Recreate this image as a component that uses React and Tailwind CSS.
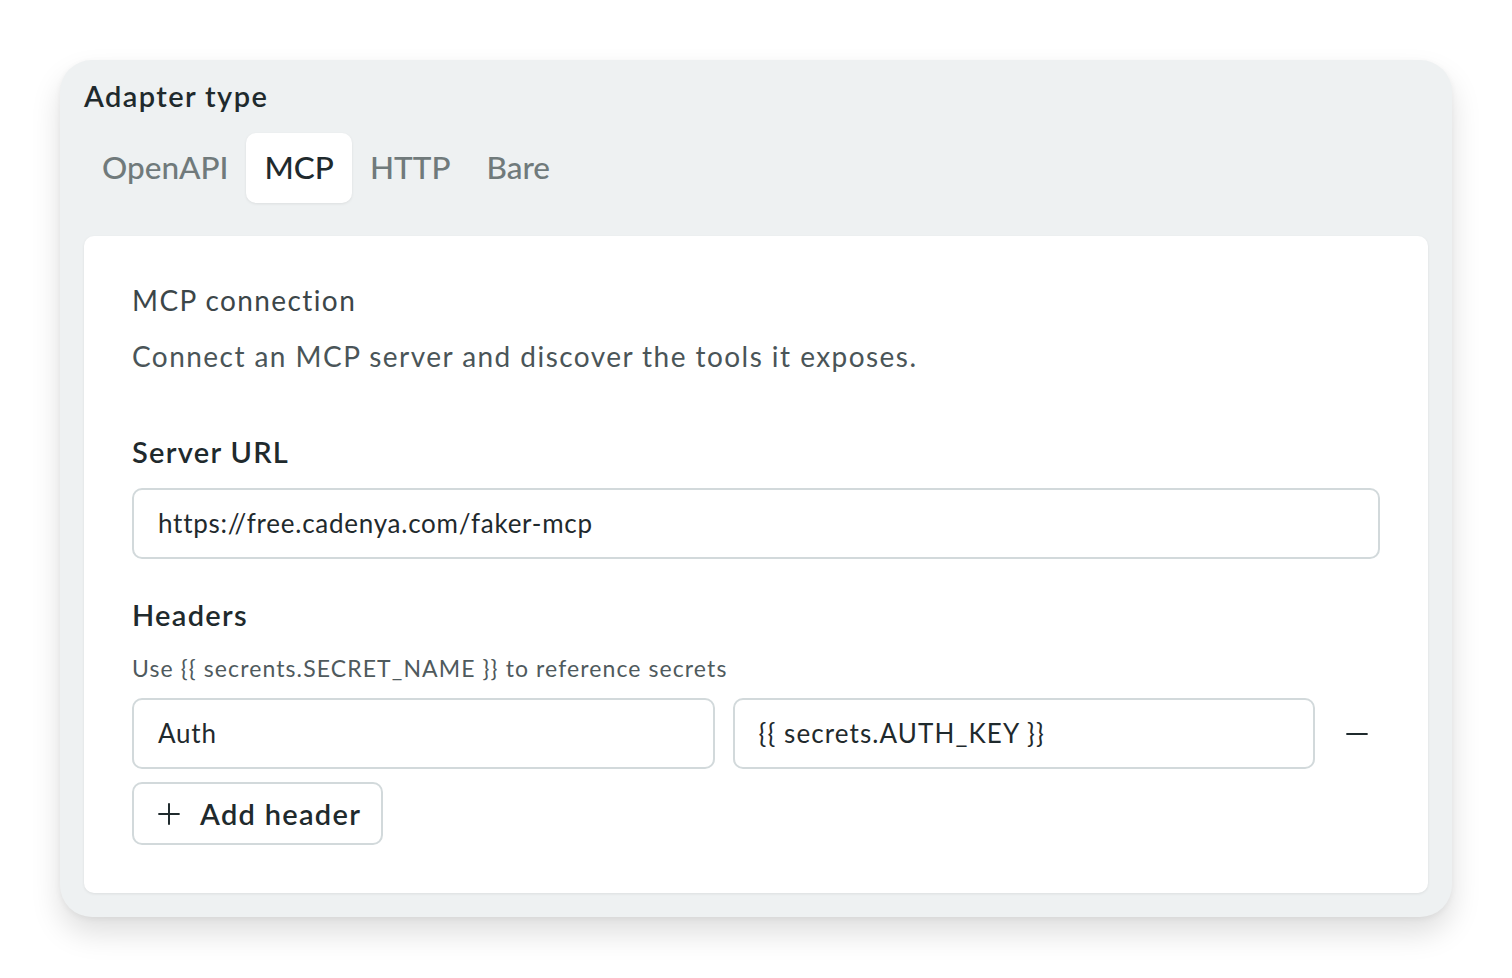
import React, { useState } from 'react';
import { Plus, Minus } from 'lucide-react';

const tabs = ['OpenAPI', 'MCP', 'HTTP', 'Bare'];

const App = () => {
  const [active, setActive] = useState('MCP');
  const [headers, setHeaders] = useState([{ key: 'Auth', value: '{{ secrets.AUTH_KEY }}' }]);

  return (
    <div className="min-h-screen bg-white font-['Lato','Noto_Sans',sans-serif] text-[#1f2a2d]">
      <div className="pl-[60px] pt-[60px]">
        <div className="w-[1392px] rounded-[32px] bg-[#eef1f2] px-[24px] pt-[16px] pb-[24px] shadow-[0_16px_30px_rgba(0,0,0,0.13),0_2px_6px_rgba(0,0,0,0.05)]">
          {/* Title */}
          <h2 className="text-[29px] font-semibold leading-[40px] tracking-[1.4px]">Adapter type</h2>

          {/* Tabs */}
          <div className="mt-[17px] flex">
            {tabs.map((tab) => (
              <button
                key={tab}
                onClick={() => setActive(tab)}
                className={
                  tab === active
                    ? 'h-[70px] rounded-[10px] bg-white px-[18px] text-[31.5px] font-medium text-[#1f2a2d] shadow-[0_1px_3px_rgba(0,0,0,0.08)]'
                    : 'h-[70px] rounded-[10px] px-[18px] text-[31.5px] font-medium text-[#707a7b]'
                }
              >
                {tab}
              </button>
            ))}
          </div>

          {/* Panel */}
          <div className="mt-[33px] rounded-[10px] bg-white px-[48px] pt-[44px] pb-[48px] shadow-[0_1px_3px_rgba(0,0,0,0.08)]">
            <h3 className="text-[28px] leading-[40px] tracking-[1.4px] text-[#3c4649]">MCP connection</h3>
            <p className="mt-[16px] text-[28px] leading-[40px] tracking-[1.45px] text-[#4a5558]">
              Connect an MCP server and discover the tools it exposes.
            </p>

            <label className="mt-[56px] block text-[29px] font-semibold leading-[40px] tracking-[1.3px]">Server URL</label>
            <div className="mt-[16px] flex h-[71px] items-center rounded-[10px] border-2 border-[#d2d9db] px-[24px] text-[26px] tracking-[0.75px]">
              https://free.cadenya.com/faker-mcp
            </div>

            <label className="mt-[36px] block text-[29px] font-semibold leading-[40px] tracking-[1.3px]">Headers</label>
            <p className="mt-[18px] text-[23px] leading-[30px] tracking-[1.1px] text-[#4f5a5d]">
              Use {'{{ secrents.SECRET_NAME }}'} to reference secrets
            </p>

            {headers.map((h, i) => (
              <div key={i} className="mt-[15px] flex items-center gap-[18px]">
                <div className="flex h-[71px] flex-1 items-center rounded-[10px] border-2 border-[#d2d9db] px-[24px] text-[26px] tracking-[0.8px]">
                  {h.key}
                </div>
                <div className="flex h-[71px] flex-1 items-center rounded-[10px] border-2 border-[#d2d9db] px-[24px] text-[26px] tracking-[1.1px]">
                  {h.value}
                </div>
                <button
                  onClick={() => setHeaders(headers.filter((_, j) => j !== i))}
                  className="flex h-[47px] w-[47px] items-center justify-center text-[#1f2a2d]"
                >
                  <Minus size={34} strokeWidth={1.4} />
                </button>
              </div>
            ))}

            <button
              onClick={() => setHeaders([...headers, { key: '', value: '' }])}
              className="mt-[13px] flex h-[63px] items-center gap-[14px] rounded-[10px] border-2 border-[#d2d9db] pl-[18px] pr-[20px] text-[29px] font-semibold tracking-[1.3px]"
            >
              <Plus size={34} strokeWidth={1.4} />
              Add header
            </button>
          </div>
        </div>
      </div>
    </div>
  );
};

export default App;
